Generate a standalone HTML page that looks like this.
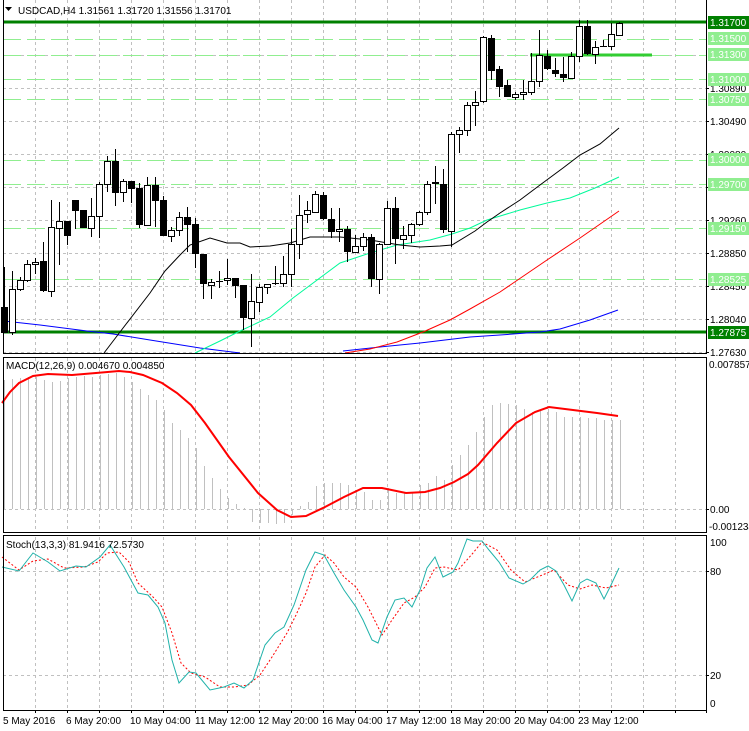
<!DOCTYPE html>
<html><head><meta charset="utf-8"><style>
html,body{margin:0;padding:0;background:#fff;}
svg{display:block;font-family:"Liberation Sans",sans-serif;font-size:10px;}
</style></head><body>
<svg width="749" height="731" viewBox="0 0 749 731" xmlns="http://www.w3.org/2000/svg">
<rect width="749" height="731" fill="#fff"/>
<!-- vertical grid -->
<g stroke="#c0c0c0" stroke-width="1" stroke-dasharray="3,3">
<path d="M35.5 0V352M67.5 0V352M99.5 0V352M131.5 0V352M163.5 0V352M195.5 0V352M227.5 0V352M259.5 0V352M291.5 0V352M323.5 0V352M355.5 0V352M387.5 0V352M419.5 0V352M451.5 0V352M483.5 0V352M515.5 0V352M547.5 0V352M579.5 0V352M611.5 0V352M643.5 0V352M675.5 0V352"/>
<path d="M35.5 358V532M67.5 358V532M99.5 358V532M131.5 358V532M163.5 358V532M195.5 358V532M227.5 358V532M259.5 358V532M291.5 358V532M323.5 358V532M355.5 358V532M387.5 358V532M419.5 358V532M451.5 358V532M483.5 358V532M515.5 358V532M547.5 358V532M579.5 358V532M611.5 358V532M643.5 358V532M675.5 358V532"/>
<path d="M35.5 537V710M67.5 537V710M99.5 537V710M131.5 537V710M163.5 537V710M195.5 537V710M227.5 537V710M259.5 537V710M291.5 537V710M323.5 537V710M355.5 537V710M387.5 537V710M419.5 537V710M451.5 537V710M483.5 537V710M515.5 537V710M547.5 537V710M579.5 537V710M611.5 537V710M643.5 537V710M675.5 537V710"/>
<path d="M3 88.5H706M3 121.5H706M3 154.5H706M3 187.5H706M3 220.5H706M3 253.5H706M3 286.5H706M3 319.5H706M3 352.5H706M3 55.5H706"/>
<path d="M3 509.5H706M3 571.5H706M3 675.5H706"/>
</g>
<!-- green dashed levels -->
<g stroke="#90ee90" stroke-width="1" stroke-dasharray="18,6">
<path d="M3 39.5H706M3 55.5H706M3 79.5H706M3 99.5H706M3 160.5H706M3 184.5H706M3 228.5H706M3 279.5H706"/>
</g>
<path d="M530 55H652" stroke="#32cd32" stroke-width="3"/>
<path d="M3 22H706M3 332H706" stroke="#008000" stroke-width="3"/>
<!-- MAs -->
<polyline fill="none" stroke="#0000ff" stroke-width="1" points="4,321 40,325 87,331 113,334 150,340 200,348 240,353"/>
<polyline fill="none" stroke="#0000ff" stroke-width="1" points="343,351 380,347 420,343 470,337 500,335 540,332 560,329 590,320 618,310"/>
<polyline fill="none" stroke="#ff0000" stroke-width="1" points="345,353 370,349 397,342 423,332 450,320 470,309 500,292 547,260 580,238 619,211"/>
<polyline fill="none" stroke="#00fa9a" stroke-width="1" points="195,353 220,341 240,331 270,317 293,298 340,263 370,253 397,245 430,240 452,234 470,228 487,220 520,210 547,203 570,198 595,188 619,177"/>
<polyline fill="none" stroke="#000" stroke-width="1" points="104,353 120,332 150,293 165,271 180,255 190,245 210,238 227,243 240,243 250,247 270,246 290,243 310,237 340,237 370,240 400,245 420,247 440,246 452,245 475,231 487,222 500,213 520,200 540,185 563,168 580,155 600,144 619,128"/>
<!-- wicks -->
<path stroke="#000" stroke-width="1" fill="none" d="M4.5 267V333M12.5 271V335M20.5 277V291M27.5 260V282M35.5 258V274M43.5 242V292M51.5 200V297M59.5 202V265M67.5 221V245M75.5 200V229M83.5 210V228M91.5 198V237M99.5 182V238M107.5 156V192M115.5 149V206M123.5 179V202M131.5 181V203M139.5 183V228M147.5 177V226M155.5 177V227M163.5 196V236M171.5 227V242M179.5 212V236M187.5 207V252M195.5 218V268M203.5 254V299M211.5 279V299M219.5 271V288M227.5 259V285M235.5 278V298M243.5 285V330M251.5 274V347M259.5 284V312M267.5 284V294M275.5 266V285M283.5 256V287M291.5 229V287M299.5 195V259M307.5 201V223M315.5 191V213M323.5 192V220M331.5 208V238M339.5 208V242M347.5 226V262M355.5 235V253M363.5 233V251M371.5 234V287M379.5 243V294M387.5 201V245M395.5 197V264M403.5 226V249M411.5 223V243M419.5 211V226M427.5 181V215M435.5 166V204M443.5 169V233M451.5 132V247M459.5 127V153M467.5 102V136M475.5 91V126M483.5 36V103M491.5 35V80M499.5 66V97M507.5 80V97M515.5 92V100M523.5 80V100M531.5 53V95M539.5 30V87M547.5 50V70M555.5 58V77M563.5 57V82M571.5 52V79M579.5 20V62M587.5 20V55M595.5 41V64M603.5 40V47M611.5 23V50M619.5 22V36M216 281.5H223M600 46.5H607M272 283.5H279"/>
<!-- white bodies -->
<g fill="#fff" stroke="#000" stroke-width="1">
<rect x="9.5" y="289.5" width="6" height="43"/><rect x="17.5" y="280.5" width="6" height="9"/><rect x="24.5" y="264.5" width="6" height="16"/><rect x="32.5" y="262.5" width="6" height="2"/><rect x="48.5" y="227.5" width="6" height="64"/><rect x="56.5" y="221.5" width="6" height="7"/><rect x="88.5" y="216.5" width="6" height="12"/><rect x="96.5" y="184.5" width="6" height="32"/><rect x="104.5" y="161.5" width="6" height="23"/><rect x="120.5" y="181.5" width="6" height="11"/><rect x="144.5" y="185.5" width="6" height="40"/><rect x="168.5" y="230.5" width="6" height="6"/><rect x="176.5" y="217.5" width="6" height="13"/><rect x="208.5" y="282.5" width="6" height="3"/><rect x="224.5" y="278.5" width="6" height="2"/><rect x="248.5" y="301.5" width="6" height="17"/><rect x="256.5" y="287.5" width="6" height="15"/><rect x="264.5" y="284.5" width="6" height="3"/><rect x="280.5" y="274.5" width="6" height="9"/><rect x="288.5" y="244.5" width="6" height="30"/><rect x="296.5" y="215.5" width="6" height="29"/><rect x="304.5" y="210.5" width="6" height="4"/><rect x="312.5" y="194.5" width="6" height="18"/><rect x="336.5" y="229.5" width="6" height="2"/><rect x="352.5" y="246.5" width="6" height="6"/><rect x="360.5" y="237.5" width="6" height="9"/><rect x="376.5" y="244.5" width="6" height="35"/><rect x="384.5" y="208.5" width="6" height="36"/><rect x="400.5" y="235.5" width="6" height="4"/><rect x="408.5" y="224.5" width="6" height="11"/><rect x="416.5" y="212.5" width="6" height="12"/><rect x="424.5" y="184.5" width="6" height="28"/><rect x="448.5" y="134.5" width="6" height="97"/><rect x="456.5" y="130.5" width="6" height="4"/><rect x="464.5" y="105.5" width="6" height="25"/><rect x="472.5" y="102.5" width="6" height="3"/><rect x="480.5" y="37.5" width="6" height="64"/><rect x="512.5" y="94.5" width="6" height="3"/><rect x="520.5" y="92.5" width="6" height="2"/><rect x="528.5" y="81.5" width="6" height="11"/><rect x="536.5" y="55.5" width="6" height="26"/><rect x="568.5" y="56.5" width="6" height="22"/><rect x="576.5" y="26.5" width="6" height="30"/><rect x="592.5" y="47.5" width="6" height="7"/><rect x="608.5" y="34.5" width="6" height="12"/><rect x="616.5" y="23.5" width="6" height="12"/>
</g>
<!-- black bodies -->
<g fill="#000">
<rect x="1" y="307" width="7" height="26"/><rect x="40" y="261" width="7" height="30"/><rect x="64" y="221" width="7" height="15"/><rect x="72" y="200" width="7" height="11"/><rect x="80" y="210" width="7" height="18"/><rect x="112" y="161" width="7" height="32"/><rect x="128" y="181" width="7" height="8"/><rect x="136" y="188" width="7" height="37"/><rect x="152" y="185" width="7" height="16"/><rect x="160" y="200" width="7" height="36"/><rect x="184" y="217" width="7" height="8"/><rect x="192" y="224" width="7" height="30"/><rect x="200" y="254" width="7" height="30"/><rect x="232" y="278" width="7" height="8"/><rect x="240" y="285" width="7" height="33"/><rect x="320" y="195" width="7" height="24"/><rect x="328" y="219" width="7" height="13"/><rect x="344" y="229" width="7" height="23"/><rect x="368" y="237" width="7" height="42"/><rect x="392" y="208" width="7" height="31"/><rect x="432" y="182" width="7" height="2"/><rect x="440" y="184" width="7" height="46"/><rect x="488" y="38" width="7" height="33"/><rect x="496" y="69" width="7" height="18"/><rect x="504" y="85" width="7" height="12"/><rect x="544" y="56" width="7" height="13"/><rect x="552" y="70" width="7" height="4"/><rect x="560" y="74" width="7" height="4"/><rect x="584" y="26" width="7" height="28"/>
</g>
<!-- MACD histogram -->
<path stroke="#c0c0c0" stroke-width="1" fill="none" d="M4.5 509V380M12.5 509V379M20.5 509V378M28.5 509V377M36.5 509V377M44.5 509V380M52.5 509V382M60.5 509V381M68.5 509V378M76.5 509V377M84.5 509V376M92.5 509V377M100.5 509V375M108.5 509V374M116.5 509V373M124.5 509V377M132.5 509V382M140.5 509V389M148.5 509V395M156.5 509V400M164.5 509V410M172.5 509V423M180.5 509V430M188.5 509V438M196.5 509V448M204.5 509V466M212.5 509V478M220.5 509V489M228.5 509V498M236.5 509V504M244.5 509V508M252.5 509V522M260.5 509V523M268.5 509V523M276.5 509V524M284.5 509V523M292.5 509V515M300.5 509V506M308.5 509V502M316.5 509V486M324.5 509V483M332.5 509V483M340.5 509V483M348.5 509V485M356.5 509V490M364.5 509V492M372.5 509V500M380.5 509V500M388.5 509V488M396.5 509V493M404.5 509V493M412.5 509V493M420.5 509V485M428.5 509V483M436.5 509V476M444.5 509V480M452.5 509V465M460.5 509V455M468.5 509V445M476.5 509V432M484.5 509V417M492.5 509V405M500.5 509V403M508.5 509V404M516.5 509V405M524.5 509V409M532.5 509V412M540.5 509V410M548.5 509V409M556.5 509V412M564.5 509V417M572.5 509V417M580.5 509V417M588.5 509V418M596.5 509V418M604.5 509V420M612.5 509V420M620.5 509V420"/>
<polyline fill="none" stroke="#ff0000" stroke-width="2" points="2,403 10,392 19,383 33,376 48,374 72,375 96,373 119,371 130,372 143,375 162,383 177,393 191,405 205,423 229,457 258,493 277,510 291,517 306,516 325,507 344,497 363,488 382,488 406,493 425,492 440,488 454,482 468,474 478,465 497,443 516,423 535,412 549,407 573,410 597,413 618,416"/>
<!-- Stoch -->
<polyline fill="none" stroke="#ff0000" stroke-width="1" stroke-dasharray="2,2" points="2,557 19,570 33,561 48,559 64,568 84,567 98,562 107,553 119,552 129,562 138,583 153,597 162,607 172,633 181,663 191,673 205,677 220,687 234,687 248,685 260,675 272,657 287,633 296,615 306,593 315,567 325,555 334,563 344,577 356,587 368,607 382,635 392,620 404,603 415,597 425,587 435,568 444,567 458,570 473,553 482,542 497,550 511,570 525,582 540,576 554,570 568,585 580,589 592,585 606,588 619,585"/>
<polyline fill="none" stroke="#20b2aa" stroke-width="1" points="2,567 19,571 33,553 48,562 60,571 76,566 86,567 100,557 110,545 124,567 138,593 148,595 158,607 165,623 172,660 179,683 189,672 196,673 210,690 224,687 234,683 244,688 253,680 265,645 275,633 284,627 294,605 306,570 315,552 324,555 334,573 344,590 356,607 363,620 372,640 378,643 387,617 395,600 404,598 412,607 420,590 427,568 435,557 443,577 453,572 458,563 467,539 473,541 482,541 489,550 499,562 509,578 523,584 530,580 540,570 548,566 556,571 564,585 572,601 580,583 587,579 596,583 604,599 611,585 619,568"/>
<!-- frames -->
<g fill="none" stroke="#000" stroke-width="1">
<path d="M3.5 0V353.5H706.5V0"/>
<rect x="3.5" y="357.5" width="703" height="175"/>
<rect x="3.5" y="535.5" width="703" height="175"/>
<path d="M706.5 710V713M35.5 710V713M67.5 710V713M99.5 710V713M131.5 710V713M163.5 710V713M195.5 710V713M227.5 710V713M259.5 710V713M291.5 710V713M323.5 710V713M355.5 710V713M387.5 710V713M419.5 710V713M451.5 710V713M483.5 710V713M515.5 710V713M547.5 710V713M579.5 710V713M611.5 710V713M643.5 710V713M675.5 710V713M706 88.5H709M706 121.5H709M706 154.5H709M706 187.5H709M706 220.5H709M706 253.5H709M706 286.5H709M706 319.5H709M706 352.5H709M706 509.5H709M706 571.5H709M706 675.5H709"/>
</g>
<!-- header -->
<path d="M5 7H12L8.5 11Z" fill="#000"/>
<text x="18" y="14" fill="#000">USDCAD,H4  1.31561 1.31720 1.31556 1.31701</text>
<text x="6" y="369" fill="#000">MACD(12,26,9) 0.004670 0.004850</text>
<text x="6" y="548" fill="#000">Stoch(13,3,3) 81.9416 72.5730</text>
<!-- price labels -->
<g fill="#000">
<text x="710" y="92">1.30890</text><text x="710" y="125">1.30490</text><text x="710" y="158">1.30080</text><text x="710" y="191">1.29670</text><text x="710" y="224">1.29260</text><text x="710" y="257">1.28850</text><text x="710" y="290">1.28450</text><text x="710" y="323">1.28040</text><text x="710" y="356">1.27630</text>
<text x="709" y="368">0.007857</text><text x="710" y="513">0.00</text><text x="709" y="530">-0.001234</text>
<text x="710" y="546">100</text><text x="710" y="575">80</text><text x="710" y="679">20</text><text x="710" y="707">0</text>
</g>
<g fill="#90ee90">
<rect x="708" y="32" width="41" height="13"/><rect x="708" y="48" width="41" height="13"/><rect x="708" y="73" width="41" height="13"/><rect x="708" y="93" width="41" height="13"/><rect x="708" y="153" width="41" height="13"/><rect x="708" y="178" width="41" height="13"/><rect x="708" y="222" width="41" height="13"/><rect x="708" y="273" width="41" height="13"/>
</g>
<g fill="#008000"><rect x="708" y="16" width="41" height="13"/><rect x="708" y="326" width="41" height="13"/></g>
<g fill="#fff">
<text x="710" y="26">1.31700</text><text x="710" y="42">1.31500</text><text x="710" y="58">1.31300</text><text x="710" y="83">1.31000</text><text x="710" y="103">1.30750</text><text x="710" y="163">1.30000</text><text x="710" y="188">1.29700</text><text x="710" y="232">1.29150</text><text x="710" y="283">1.28525</text><text x="710" y="336">1.27875</text>
</g>
<!-- time labels -->
<g fill="#000">
<text x="3" y="724">5 May 2016</text><text x="66" y="724">6 May 20:00</text><text x="130" y="724">10 May 04:00</text><text x="195" y="724">11 May 12:00</text><text x="258" y="724">12 May 20:00</text><text x="322" y="724">16 May 04:00</text><text x="386" y="724">17 May 12:00</text><text x="450" y="724">18 May 20:00</text><text x="514" y="724">20 May 04:00</text><text x="578" y="724">23 May 12:00</text>
</g>
</svg>
</body></html>
